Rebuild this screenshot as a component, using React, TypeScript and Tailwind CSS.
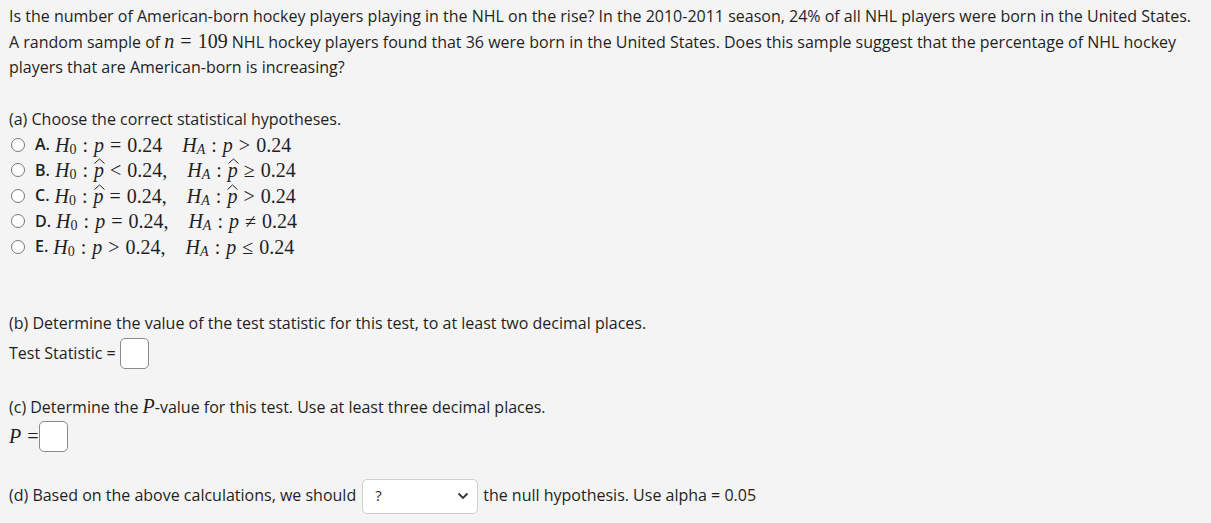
import React from "react";

const M = ({ children }: { children: React.ReactNode }) => (
  <span className="whitespace-nowrap font-['Liberation_Serif','DejaVu_Serif',serif] text-[20px] leading-none">{children}</span>
);

const I = ({ children }: { children: React.ReactNode }) => <i className="italic">{children}</i>;

// relation symbol with thick spaces either side, as in the typeset formulas
const R = ({ children }: { children: React.ReactNode }) => <span className="mx-[6px]">{children}</span>;

// p with a wide hat
const PHat = () => (
  <span className="relative inline-block italic">
    p
    <svg className="absolute left-[0px] top-[-2px]" width="11" height="6" viewBox="0 0 11 6">
      <path d="M0.5 5.5 L5.5 1 L10.5 5.5" fill="none" stroke="#222" strokeWidth="1" />
    </svg>
  </span>
);

const H = ({ sub }: { sub: string }) => (
  <>
    <I>H</I>
    <sub className="relative top-[2px] text-[14px] leading-none">{sub === "A" ? <I>A</I> : sub}</sub>
  </>
);

const options: { label: string; h0: React.ReactNode; ha: React.ReactNode }[] = [
  {
    label: "A.",
    h0: <><H sub="0" /><R>:</R><I>p</I><R>=</R>0.24</>,
    ha: <><H sub="A" /><R>:</R><I>p</I><R>&gt;</R>0.24</>,
  },
  {
    label: "B.",
    h0: <><H sub="0" /><R>:</R><PHat /><R>&lt;</R>0.24,</>,
    ha: <><H sub="A" /><R>:</R><PHat /><R>≥</R>0.24</>,
  },
  {
    label: "C.",
    h0: <><H sub="0" /><R>:</R><PHat /><R>=</R>0.24,</>,
    ha: <><H sub="A" /><R>:</R><PHat /><R>&gt;</R>0.24</>,
  },
  {
    label: "D.",
    h0: <><H sub="0" /><R>:</R><I>p</I><R>=</R>0.24,</>,
    ha: <><H sub="A" /><R>:</R><I>p</I><R>≠</R>0.24</>,
  },
  {
    label: "E.",
    h0: <><H sub="0" /><R>:</R><I>p</I><R>&gt;</R>0.24,</>,
    ha: <><H sub="A" /><R>:</R><I>p</I><R>≤</R>0.24</>,
  },
];

export default function App() {
  return (
    <div className="min-h-[523px] bg-[#f4f4f4] pl-[9px] pr-[6px] pt-[4px] text-[16px] leading-[25.5px] text-[#1f1f1f] font-['Open_Sans','Noto_Sans',sans-serif]">
      <p>
        Is the number of American-born hockey players playing in the NHL on the rise? In the 2010-2011 season, 24% of
        all NHL players were born in the United States. A random sample of{" "}
        <M>
          <I>n</I>
          <R>=</R>109
        </M>{" "}
        NHL hockey players found that 36 were born in the United States. Does this sample suggest that the percentage of
        NHL hockey players that are American-born is increasing?
      </p>

      <p className="mt-[26px]">(a) Choose the correct statistical hypotheses.</p>
      <div className="flex flex-col">
        {options.map((o) => (
          <label key={o.label} className="flex h-[25.5px] items-center">
            <span className="ml-[2px] mr-[10px] h-[14px] w-[14px] rounded-full border border-[#767676] bg-white" />
            <span className="mr-[5px] font-semibold">{o.label}</span>
            <M>
              {o.h0}
              <span className="ml-[20px]">{o.ha}</span>
            </M>
          </label>
        ))}
      </div>

      <p className="mt-[51px]">(b) Determine the value of the test statistic for this test, to at least two decimal places.</p>
      <div className="mt-[2px] flex items-center">
        <span>Test Statistic =</span>
        <span className="ml-[4px] h-[31px] w-[29px] rounded-[5px] border border-[#8a8a8a] bg-white" />
      </div>

      <p className="mt-[26px]">
        (c) Determine the{" "}
        <M>
          <I>P</I>
        </M>
        -value for this test. Use at least three decimal places.
      </p>
      <div className="flex items-center">
        <M>
          <I>P</I>
          <span className="ml-[6px]">=</span>
        </M>
        <span className="h-[31px] w-[29px] rounded-[5px] border border-[#8a8a8a] bg-white" />
      </div>

      <div className="mt-[27px] flex items-center">
        <span>(d) Based on the above calculations, we should</span>
        <div className="ml-[6px] mr-[5px] flex h-[35px] w-[116px] items-center justify-between rounded-[5px] border border-[#cfcfcf] bg-white pl-[12px] pr-[8px]">
          <span className="text-[15px]">?</span>
          <svg width="12" height="8" viewBox="0 0 12 8">
            <path d="M1.5 1.5 L6 6 L10.5 1.5" fill="none" stroke="#333" strokeWidth="1.8" />
          </svg>
        </div>
        <span>the null hypothesis. Use alpha = 0.05</span>
      </div>
    </div>
  );
}
